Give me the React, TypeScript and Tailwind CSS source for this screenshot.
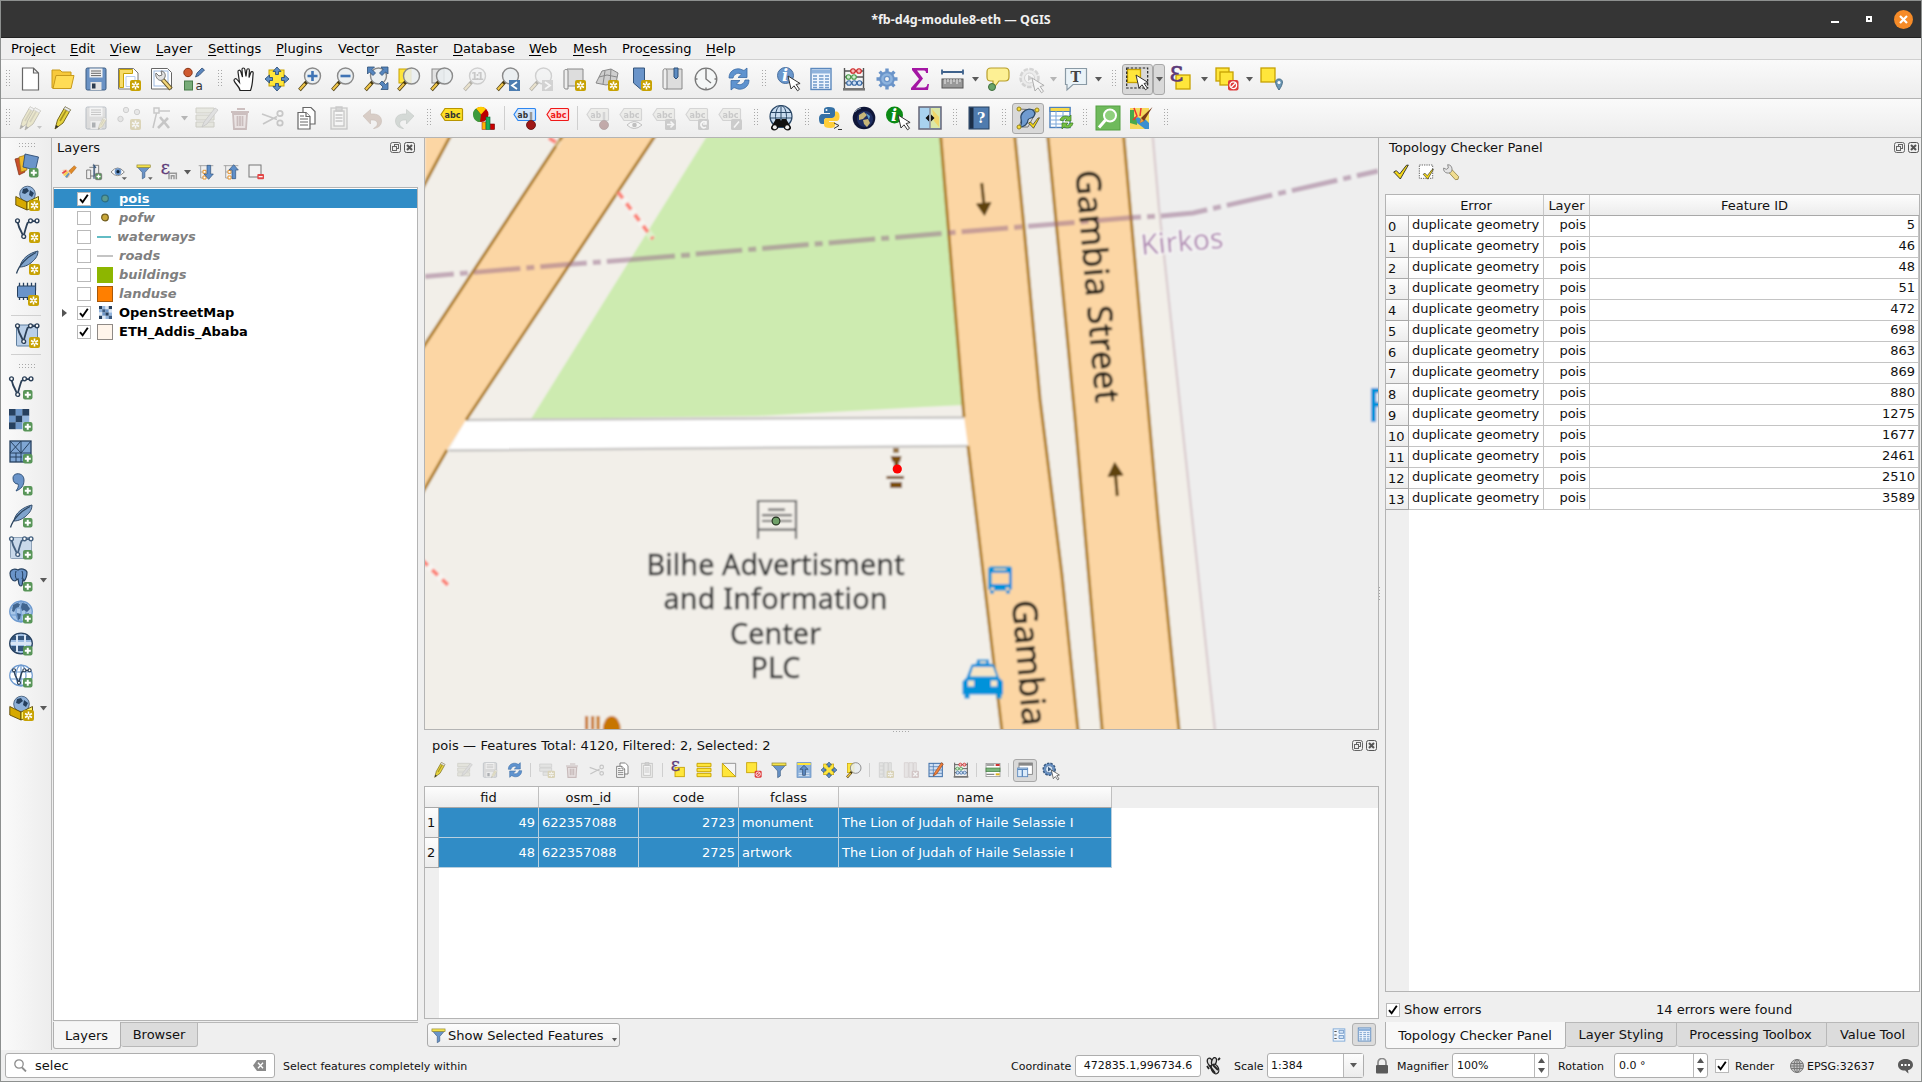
import React from "react";

type Kids = { children?: React.ReactNode };

/* ---------- shared icon parts ---------- */

const Star = ({ x = 13, y = 13 }: { x?: number; y?: number }) => (
  <g transform={`translate(${x} ${y})`}>
    <rect width="11" height="11" rx="2" fill="#c7a203" />
    <path d="M5.5 1.5v8M2 3.5l7 4M9 3.5l-7 4" stroke="#fff" strokeWidth="1.6" />
    <circle cx="5.5" cy="5.5" r="1" fill="#c7a203" />
  </g>
);
const Plus = ({ x = 14, y = 14 }: { x?: number; y?: number }) => (
  <g transform={`translate(${x} ${y})`}>
    <rect width="9.5" height="9.5" rx="2" fill="#589558" />
    <path d="M4.75 1.8v6M1.8 4.75h6" stroke="#fff" strokeWidth="2" />
  </g>
);
const Lens = ({ children }: Kids) => (
  <g>
    <path d="M1.5 23L9 14.5" stroke="#4a3b10" strokeWidth="3.6" />
    <path d="M1.8 22.6L7 16.8" stroke="#f0c64a" strokeWidth="2.2" />
    <circle cx="14.5" cy="9" r="8" fill="#e9edf0" fillOpacity=".85" stroke="#8a8a8a" strokeWidth="1.4" />
    {children}
  </g>
);
const Cursor = ({ x = 12, y = 9 }: { x?: number; y?: number }) => (
  <path
    transform={`translate(${x} ${y})`}
    d="M0 0l3 13 3-3.2 3.5 5 2-1.5-3.4-4.8 4-1z"
    fill="#fff"
    stroke="#333"
    strokeWidth="1"
  />
);
const Pencil = () => (
  <g>
    <path d="M2 23l2.5-9L12 .8l5.5 3L10 17z" fill="#e6d33c" stroke="#77691d" strokeWidth="1" />
    <path d="M7 15L14 3" stroke="#a59220" strokeWidth="1.6" />
    <path d="M2 23l1-4 2.5 1.5z" fill="#333" />
    <path d="M12 .8l5.5 3-1.3 2-5.3-3z" fill="#eee" stroke="#888" strokeWidth=".6" />
  </g>
);
const Floppy = ({ c = "#6a92c4" }: { c?: string }) => (
  <g>
    <rect x="2" y="1" width="20" height="22" rx="1.5" fill={c} stroke="#3a5a80" />
    <rect x="5.5" y="1.5" width="13" height="9" fill="#f2f2f2" />
    <path d="M7 4h10M7 6.3h10M7 8.6h10" stroke="#666" />
    <rect x="6.5" y="15" width="11" height="8" fill="#e4e4e4" />
    <rect x="8" y="16.5" width="3.5" height="5" fill="#2b3b4e" />
  </g>
);
const VNodes = ({ c = "#2b3f57" }: { c?: string }) => (
  <g fill="none" stroke={c} strokeWidth="1.4">
    <path d="M2.5 3.500L4 9q2 4 4.500 9.500Q11 9 12.500 5L15 3.200h7" strokeWidth="1.800" />
    <circle cx="2.500" cy="2.800" r="1.900" fill="#fff" />
    <circle cx="8.700" cy="18.500" r="1.900" fill="#fff" />
    <circle cx="15.500" cy="2.800" r="1.900" fill="#fff" />
    <circle cx="22" cy="2.800" r="1.900" fill="#fff" />
  </g>
);
const Tag = ({ fill, stroke, color, t = "abc" }: { fill: string; stroke: string; color: string; t?: string }) => (
  <g>
    <path d="M1 8.5L5 2.5h16.5a1 1 0 0 1 1 1v10a1 1 0 0 1-1 1H5z" fill={fill} stroke={stroke} strokeWidth="1.2" />
    <text x="4.6" y="12" fontSize="9.5" fontWeight="700" fontFamily="DejaVu Sans, sans-serif" fill={color} textLength={t === "abc" ? 16 : 10.5} lengthAdjust="spacingAndGlyphs">
      {t}
    </text>
  </g>
);
const Feather = () => (
  <g>
    <path d="M5 17C6 9 14 3 23 1c0 6-4 9-6 11s-7 5-12 5z" fill="#7fa3cc" stroke="#36506e" strokeWidth="1" />
    <path d="M1.5 23.5C4 15 12 7 21 2.5" fill="none" stroke="#2f4761" strokeWidth="1.3" />
  </g>
);
const Checker = ({ s = 20 }: { s?: number }) => {
  const u = s / 3;
  const cols = ["#26405f", "#6d96c8", "#26405f", "#6d96c8", "#26405f", "#93b5dd", "#26405f", "#6d96c8", "#b9d0ea"];
  return (
    <g>
      {cols.map((c, i) => (
        <rect key={i} x={(i % 3) * u} y={1 + Math.floor(i / 3) * u} width={u + 0.2} height={u + 0.2} fill={c} />
      ))}
    </g>
  );
};
const MiniRaster = () => {
  const c = ["#26405f", "#93b5dd", "#dbe7f5", "#26405f", "#93b5dd", "#3c5c82", "#6d96c8", "#dbe7f5", "#dbe7f5", "#6d96c8", "#26405f", "#93b5dd", "#26405f", "#dbe7f5", "#93b5dd", "#3c5c82"];
  return (
    <svg width="13" height="13" viewBox="0 0 4 4">
      {c.map((f, i) => (
        <rect key={i} x={i % 4} y={Math.floor(i / 4)} width="1.03" height="1.03" fill={f} />
      ))}
    </svg>
  );
};
const Globe = ({ fill = "#a9c7e8" }: { fill?: string }) => (
  <g fill="none" stroke="#6f9bd0" strokeWidth="1.2">
    <ellipse cx="12" cy="11.5" rx="11.3" ry="10.3" fill={fill} />
    <ellipse cx="12" cy="11.5" rx="5" ry="10.3" />
    <path d="M1.5 8h21M1.5 15h21M12 1v21" />
  </g>
);
const Continents = () => (
  <path d="M4 5l4-2 3 1-1 3-3 1-2 4-2-1zM13 3l5 1 3 5-3 3-3-2-2 1-1-4zM8 13l4 1-1 5-2 1zM16 14l4-1-2 5-2 1z" fill="#41658f" />
);
const Box = () => (
  <g>
    <circle cx="12.5" cy="8" r="7.8" fill="#8fb1d9" stroke="#36506e" strokeWidth=".8" />
    <path d="M8 3l4-1 2 3-4 3-3-1zM15 4l4 3-2 4-3-2z" fill="#26405f" />
    <path d="M.8 10.5L12 16v8L.8 19z" fill="#d6a900" stroke="#5c4a06" strokeWidth=".9" />
    <path d="M12 16l11.5-5.5V19L12 24z" fill="#fff35e" stroke="#5c4a06" strokeWidth=".9" />
  </g>
);
const Gear = ({ c = "#6a94c9", fill = "#8db3de" }: { c?: string; fill?: string }) => (
  <g stroke={c} fill="none">
    <path d="M12 1.500v21M1.500 12h21M4.600 4.600l14.800 14.800M19.400 4.600L4.600 19.400" strokeWidth="3.400" />
    <circle cx="12" cy="12" r="6.800" fill={fill} strokeWidth="2" />
    <circle cx="12" cy="12" r="2.600" fill="#f3f3f3" strokeWidth="1.300" />
  </g>
);
const Abacus = () => (
  <g>
    <path d="M2.5 1v21M21.5 1v21M2.5 4h19M2.5 10h19M2.5 16h19" stroke="#555" strokeWidth="1.4" />
    <rect x="1" y="21" width="22" height="2.6" fill="#777" />
    <g strokeWidth="1.1">
      <g fill="#f7b9b9" stroke="#c22">
        <circle cx="11" cy="4" r="2.3" /><circle cx="17" cy="4" r="2.3" />
      </g>
      <g fill="#cdeccd" stroke="#4a9a4a">
        <circle cx="6.5" cy="10" r="2.3" /><circle cx="12" cy="10" r="2.3" />
      </g>
      <g fill="#cfe0f5" stroke="#3a6aa5">
        <circle cx="7" cy="16" r="2.3" /><circle cx="12.3" cy="16" r="2.3" /><circle cx="17.5" cy="16" r="2.3" />
      </g>
    </g>
  </g>
);
const TableGrid = () => (
  <g>
    <rect x="2" y="1.5" width="20" height="21" fill="#eef5fd" stroke="#5b88bd" strokeWidth="1.4" />
    <rect x="3" y="2.5" width="18" height="4" fill="#8fb3dc" />
    <path d="M4 9h4M10 9h4.500M16 9h4M4 12h4M10 12h4.500M16 12h4M4 15h4M10 15h4.500M16 15h4M4 18h4M10 18h4.500M16 18h4M4 20.500h4M10 20.500h4.500M16 20.500h4" stroke="#6f99c9" strokeWidth="1.3" />
  </g>
);
const Refresh = () => (
  <g fill="#5f93cf" stroke="#3b6ba5" strokeWidth=".8">
    <path d="M2 11C2 4 8 1 13 2l4 1.500L20 1v9.500h-9l3.500-3.300C11 5 7 7 6 11z" />
    <path d="M22 13c0 7-6 10-11 9l-4-1.500L4 23v-9.500h9l-3.500 3.300C13 19 17 17 18 13z" />
  </g>
);
const Funnel = () => (
  <g>
    <path d="M2 4.500h20l-8 9V21l-4 2.500v-10z" fill="#6a94c9" stroke="#3a5a80" strokeWidth="1" />
    <rect x="1.500" y="1.500" width="21" height="4" fill="#f5e34d" stroke="#8d8330" strokeWidth="1" />
  </g>
);
const YSq = ({ x, y, s = 14 }: { x: number; y: number; s?: number }) => (
  <rect x={x} y={y} width={s} height={s} fill="#ffe63b" stroke="#c7a203" strokeWidth="1.3" />
);
const No = ({ x = 13, y = 13 }: { x?: number; y?: number }) => (
  <g transform={`translate(${x} ${y})`}>
    <rect width="10.500" height="10.500" rx="2" fill="#de3a3a" />
    <circle cx="5.250" cy="5.250" r="3.300" fill="none" stroke="#fff" strokeWidth="1.300" />
    <path d="M3 7.500l4.500-4.500" stroke="#fff" strokeWidth="1.300" />
  </g>
);
const Eps = ({ x = -0.5, y = 14, s = 27 }: { x?: number; y?: number; s?: number }) => (
  <text x={x} y={y} fontSize={s} fontFamily="DejaVu Serif, serif" fill="#5c3a78" stroke="#5c3a78" strokeWidth=".4">ε</text>
);
const Arrows4 = () => (
  <path
    d="M12 0l4 4.500h-2.500v3h-3v-3H8zM12 24l-4-4.500h2.500v-3h3v3H16zM0 12l4.500-4v2.500h3v3h-3V16zM24 12l-4.500 4v-2.500h-3v-3h3V8z"
    fill="#5f8fc9"
    stroke="#2e5078"
    strokeWidth=".9"
  />
);
const Trash = () => (
  <g fill="none" stroke="#a05555" strokeWidth="1.800">
    <path d="M5 8h14l-1 15H6z" fill="#e8c4c4" />
    <path d="M3 6h18M9 3h8M9.500 10v10M12 10v10M14.500 10v10" />
  </g>
);
const Scissors = () => (
  <g fill="none" stroke="#777" strokeWidth="1.800">
    <path d="M1 8l15 5.500M2 18l14-7.500" />
    <circle cx="19" cy="7.500" r="2.700" /><circle cx="19" cy="17" r="2.700" />
  </g>
);
const Copy = () => (
  <g fill="#fff" stroke="#666" strokeWidth="1.200">
    <path d="M9 1.500h8l4 4V18H9z" />
    <path d="M4 6.500h8l4 4V23H4z" />
    <path d="M6 13h8M6 16h8M6 19h8M6 10h4" />
    <path d="M12 6.500v4h4" />
  </g>
);
const Paste = () => (
  <g fill="#e6e6dc" stroke="#777" strokeWidth="1.300">
    <rect x="4" y="2" width="16" height="21" /><rect x="7" y="5" width="10" height="15" fill="#fff" />
    <path d="M9 1h6v4H9z" fill="#999" /><path d="M8.500 9h7M8.500 12h7M8.500 15h7" />
  </g>
);
const Undo = () => <path d="M3 10l7.500-6.500V8c7-.5 11 2 11 7s-4 7-8 7.500c3.500-2 4.500-4 3.500-6.500-.8-1.700-3-2.200-6.500-2v4z" fill="#c2805a" stroke="#94552f" strokeWidth=".6" />;
const RowsEdit = () => (
  <g>
    <path d="M1 2h18v5H1zM1 9h18v5H1zM1 16h18v5H1z" fill="#cfd1a8" stroke="#8c8c60" />
    <path d="M7 21l2-5 11-14 3 2-11 14z" fill="#bbb" stroke="#777" strokeWidth=".8" />
  </g>
);
const BrushI = () => (
  <g>
    <path d="M11 11l9-8.500 3 3L15 15z" fill="#e08a28" stroke="#9a5510" strokeWidth=".7" />
    <path d="M2 9l6-1 7 6-3 6-4 1z" fill="#f7c9a9" />
    <path d="M1 13l6-4 2 2-6 4z" fill="#e94848" /><path d="M3 16l6-5 2 2-6 5z" fill="#f5d34a" /><path d="M6 19l5-6 2 2-4 6z" fill="#69b" />
  </g>
);
const Check2 = ({ x = 0, y = 0 }: { x?: number; y?: number }) => (
  <path transform={`translate(${x} ${y})`} d="M1 12l4-2 5 5L20 2l3-.500-12 21z" fill="#f5d818" stroke="#222" strokeWidth="1.300" />
);
const Wrench = () => (
  <g>
    <path d="M10 9.500L13 8l10.500 11-1 4-4 .5L9 13z" fill="#f0dc90" stroke="#8f7f40" strokeWidth="1.200" />
    <path d="M1 6l4 2 3-2-1-5c5 0 7 4 6.500 8S9 14 6 13.500 0 10 1 6z" fill="#e4e4e4" stroke="#777" strokeWidth="1.200" />
  </g>
);
const Tree = ({ up = false }: { up?: boolean }) => (
  <g>
    <path d="M1 2.500h22M4 2.500V21h4M4 12h4" stroke="#999" strokeWidth="1.300" fill="none" />
    <path d="M7.500 9.500h4.500v4.500H7.500zM7.500 18h4.500v4.500H7.500z" fill="#fff" stroke="#e8942a" strokeWidth="1.500" />
    <path
      d={up ? "M16 1l7 8h-4v13h-5.500V9H9z" : "M16 23l7-8h-4V2h-5.500v13H9z"}
      fill="#5f8fc9" stroke="#2e5078" strokeWidth="1"
    />
  </g>
);
const PinDot = () => (
  <g>
    <path d="M18 6v9" stroke="#999" strokeWidth="2.500" />
    <circle cx="18" cy="19" r="4.500" fill="#a01818" stroke="#5c0c0c" strokeWidth=".8" />
  </g>
);
const badge = (d: string) => (
  <g>
    <rect x="13" y="13" width="11" height="11" rx="1.500" fill="#888" />
    <path d={d} stroke="#fff" strokeWidth="1.600" fill="none" />
  </g>
);

const ICONS: Record<string, React.ReactNode> = {
  file: <path d="M4.500 1h11l5 5v17h-16zM15.500 1v5h5" fill="#fff" stroke="#666" strokeWidth="1.200" />,
  open: (
    <g stroke="#c79a1b" strokeWidth="1">
      <path d="M1 3h8l2 2h9v4H6L3 21H1z" fill="#f7c93b" />
      <path d="M5 8.500h18L20 21.500H2z" fill="#ffdc55" />
    </g>
  ),
  save: <Floppy />,
  layoutNew: (
    <g>
      <path d="M1.500 1.500h15l4.500 4.500v16H1.500z" fill="#fff" stroke="#777" />
      <path d="M2.500 2.500h13v4h-9v14h-4z" fill="#f7dc6a" stroke="#c7a203" />
      <path d="M9 9.500h9v10H9z" fill="none" stroke="#b9cdf0" />
      <Star />
    </g>
  ),
  layoutMgr: (
    <g>
      <path d="M1.500 1.500h16l4 4v16.500h-20z" fill="#fff" stroke="#666" />
      <rect x="4" y="4" width="14" height="15" fill="none" stroke="#9db9e0" />
      <path d="M12 12l9 10" stroke="#6b5a2a" strokeWidth="4.500" /><path d="M12.500 12.500l8 9" stroke="#f3d67a" strokeWidth="2.600" />
      <path d="M6 6l3 3 3-1-1-4c3 0 5 3 4 6s-4 4-6 3-4-4-3-7z" fill="#e2e2e2" stroke="#666" strokeWidth=".9" />
    </g>
  ),
  style: (
    <g>
      <circle cx="5" cy="5.500" r="4.200" fill="#cf5a30" stroke="#8b3718" />
      <path d="M12.500 10l1.500-4 5-5 2.500 2L16 8.500z" fill="#5b86bd" stroke="#2e4d74" strokeWidth=".8" />
      <rect x="1.500" y="14" width="8" height="9" fill="#77ab78" stroke="#477a48" />
      <text x="12.500" y="22.500" fontSize="12" fontFamily="DejaVu Sans, sans-serif" fill="#333">a</text>
    </g>
  ),
  hand: <path d="M8 23.500c0-3.500-5-6.500-6-10 0-2 2-2.500 3.500-.5l2 2.500L6 5c-.3-2 2-2.500 2.700-.6L10.500 10 10 2.500c0-2 2.600-2 2.900 0L14 9.500l.8-6.500c.3-1.800 2.600-1.600 2.600.3L17 10.500l1.800-5c.6-1.500 2.600-1 2.400.7C20.500 11 21 17 18.500 23.500z" fill="#fff" stroke="#222" strokeWidth="1.200" />,
  pan: <g><rect x="4" y="3" width="15" height="16" fill="#ffe63b" stroke="#c7a203" /><Arrows4 /></g>,
  zin: <Lens><path d="M14.500 4v10M9.500 9h10" stroke="#3f74b5" strokeWidth="2.600" /></Lens>,
  zout: <Lens><path d="M9.500 9h10" stroke="#3f74b5" strokeWidth="2.600" /></Lens>,
  zfull: (
    <g>
      <Lens />
      <path d="M3.500 0h7L8 2.500l3.500 3.500-2.500 2.500L5.500 5 3.500 7zM24 0v7l-2.500-2L18 8.500 15.500 6 19 2.500 17 0zM24 22.500h-7l2-2.500-3.500-3.500L18 14l3.500 3.500 2.500-2z" fill="#5585bd" stroke="#2e5078" strokeWidth=".8" />
    </g>
  ),
  zsel: <g><rect x="2" y="2" width="12" height="14" fill="#ffe63b" stroke="#c7a203" /><Lens /></g>,
  zlay: <g><rect x="2" y="2" width="12" height="14" fill="#e2e2e2" stroke="#888" /><Lens /></g>,
  z11: <Lens><text x="8" y="13" fontSize="10" fontWeight="700" fontFamily="DejaVu Sans, sans-serif" fill="#777" textLength="13">1:1</text></Lens>,
  zlast: <g><Lens /><rect x="13" y="13" width="11" height="11" fill="#4c7cb0" /><path d="M21 15l-5 3.500 5 3.500" stroke="#fff" strokeWidth="1.800" fill="none" /></g>,
  znext: <g><Lens /><rect x="13" y="13" width="11" height="11" fill="#999" /><path d="M16 15l5 3.500-5 3.500" stroke="#fff" strokeWidth="1.800" fill="none" /></g>,
  mapnew: <g><path d="M5 2h16v17H5z" fill="#ddd" stroke="#888" /><path d="M2 4c0-2 4-2 4 0v18H4c-1.500 0-2-1-2-2z" fill="#eee" stroke="#888" /><Star /></g>,
  view3d: <g><path d="M1 16L7 4l9-2 7 4-2 10-10 2z" fill="#cfcfcf" stroke="#888" /><path d="M4 10l8-2 10 2M10 4l-2 13M16 2l-1 15" stroke="#888" fill="none" /><Star /></g>,
  bmnew: <g><path d="M5.500 1h11v18l-4 3-7-6z" fill="#6a94c9" stroke="#34557c" /><Star /></g>,
  bm: <g><path d="M5 2h16v20H5z" fill="#ddd" stroke="#888" /><path d="M2 4c0-3 4-3 4 0v18H4c-1.500 0-2-1-2-2z" fill="#eee" stroke="#888" /><path d="M13 1h4v9l-2 2-2-2z" fill="#5d8cc2" stroke="#2e5078" /></g>,
  clock: <g><circle cx="12" cy="12" r="10.800" fill="#f5f7f7" stroke="#777" strokeWidth="1.300" /><path d="M12 3v9l5 4M12 1.500v2M12 20.500v2M1.500 12h2M20.500 12h2" stroke="#777" strokeWidth="1.400" fill="none" /></g>,
  refresh: <Refresh />,
  identify: <g><circle cx="9.500" cy="8.500" r="8" fill="#6a97cc" stroke="#486f9f" /><text x="6" y="14" fontSize="16" fontWeight="700" fontStyle="italic" fontFamily="DejaVu Serif, serif" fill="#fff">i</text><Cursor /></g>,
  table: <TableGrid />,
  abacus: <Abacus />,
  gear: <Gear />,
  sigma: <path d="M4 1h16v5h-2c0-2-1-2.500-3-2.500H9l6 8-7 9h8c2 0 3-1 3.500-3.500h1.500L20 23H3v-2l8-9-7-9z" fill="#a416a4" />,
  measure: <g><path d="M1 5h21M1 2.500v5M22 2.500v5" stroke="#3f628c" strokeWidth="1.800" /><rect x="1" y="12" width="21" height="9" fill="#999" stroke="#555" /><path d="M4 12v5M7 12v3M10 12v5M13 12v3M16 12v5M19 12v3" stroke="#eee" /></g>,
  balloon: <g><path d="M5 1h14c3 0 4 1 4 4v5c0 3-1 4-4 4h-6l-6 8V14H5c-3 0-4-1-4-4V5c0-3 1-4 4-4z" fill="#fdf094" stroke="#b79e2a" strokeWidth="1.200" /><circle cx="6" cy="20" r="3.500" fill="#69a469" stroke="#3e6e3e" /></g>,
  gearsel: <g><circle cx="10.500" cy="11" r="9" fill="#ddd" stroke="#999" strokeWidth="2.500" strokeDasharray="4.500 1.500" /><circle cx="10.500" cy="11" r="5" fill="#f4f4f4" stroke="#999" /><path d="M9 8v6l5-3z" fill="#888" /><Cursor x={13} y={11} /></g>,
  text: <g><path d="M1.500 1.500h21v16H9L3 23v-5.500H1.500z" fill="#eaf3f8" stroke="#8a9aa5" strokeWidth="1.200" /><text x="6.500" y="14.500" fontSize="14" fontWeight="700" fontFamily="DejaVu Serif, serif" fill="#444">T</text></g>,
  select: <g><YSq x={1.500} y={2.500} s={13} /><rect x=".7" y="1" width="21" height="20" fill="none" stroke="#222" strokeWidth="1.200" strokeDasharray="2.500 1.500" /><Cursor x={10} y={8} /></g>,
  selexp: <g><YSq x={6} y={8} /><Eps /></g>,
  desel: <g><YSq x={1} y={1} s={13} /><YSq x={5} y={5} s={13} /><No /></g>,
  selloc: <g><YSq x={1} y={1} /><path d="M19 23c-5-7-4-11 0-11s5 4 0 11z" fill="#6b97b5" stroke="#446a85" /><circle cx="19" cy="15.500" r="1.500" fill="#fff" /></g>,

  pencils: <g><Pencil /><g transform="translate(5 1)"><Pencil /></g><path d="M19 20h5l-2.500 3z" fill="#777" /></g>,
  pencil: <g transform="translate(2 0)"><Pencil /></g>,
  saveEdit: <g><Floppy c="#b5b5b5" /><g transform="translate(13 11) scale(.55)"><Pencil /></g></g>,
  points: <g><g fill="#ccc" stroke="#888"><circle cx="9" cy="4" r="2.700" /><circle cx="20" cy="6" r="2.700" /><circle cx="3.500" cy="13" r="2.700" /></g><Star /></g>,
  vertex: <g fill="none" stroke="#777" strokeWidth="1.500"><path d="M3 22L7 5h13" /><rect x="4" y="2" width="5" height="5" fill="#eee" /><path d="M8 22l10-10M10 11l9 11" strokeWidth="2.600" /></g>,
  rowsEdit: <RowsEdit />,
  trash: <Trash />,
  cut: <Scissors />,
  copy: <Copy />,
  paste: <Paste />,
  undo: <Undo />,
  redo: <g transform="translate(24 0) scale(-1 1)"><path d="M3 10l7.500-6.500V8c7-.5 11 2 11 7s-4 7-8 7.500c3.500-2 4.500-4 3.500-6.500-.8-1.700-3-2.200-6.500-2v4z" fill="#8fae9c" stroke="#607a6a" strokeWidth=".6" /></g>,
  abc: <Tag fill="#ffe026" stroke="#b89500" color="#333" />,
  diagram: (
    <g>
      <circle cx="8" cy="8.500" r="7.500" fill="#b00" /><path d="M8 8.500L3 2.500A7.500 7.500 0 0 1 13 3z" fill="#ffce00" /><path d="M8 8.500L3 2.500A7.500 7.500 0 0 0 7 16z" fill="#3c9a3c" />
      <rect x="9" y="16" width="4" height="7.500" fill="#ffb400" stroke="#a33" strokeWidth=".6" /><rect x="13" y="11" width="4" height="12.500" fill="#1cae5c" stroke="#063" strokeWidth=".6" /><rect x="17.500" y="18" width="4" height="5.500" fill="#c00" stroke="#600" strokeWidth=".6" />
    </g>
  ),
  abpin: <g><Tag fill="#d3e6fb" stroke="#2e86f0" color="#333" t="ab" /><PinDot /></g>,
  abred: <Tag fill="#ffdede" stroke="#f01818" color="#f01818" />,
  tpin: <g><Tag fill="#ddddd0" stroke="#999" color="#777" t="ab" /><PinDot /></g>,
  teye: <g><Tag fill="#ddddd0" stroke="#999" color="#777" /><path d="M8 19q7-7 15 0-8 7-15 0z" fill="#fff" stroke="#666" /><circle cx="15.500" cy="19" r="2.300" fill="#666" /></g>,
  tmove: <g><Tag fill="#ddddd0" stroke="#999" color="#777" />{badge("M15 18.500h6M18.500 15.500l3 3-3 3")}</g>,
  trot: <g><Tag fill="#ddddd0" stroke="#999" color="#777" />{badge("M21 16.500a3 3 0 1 0 0 4.500M21 15v3h-3")}</g>,
  tedit: <g><Tag fill="#ddddd0" stroke="#999" color="#777" />{badge("M16 21.500l5-6")}</g>,
  binoc: (
    <g>
      <circle cx="12" cy="10.500" r="11" fill="#c9dcf0" stroke="#2b4867" strokeWidth="1.200" /><g stroke="#2b4867" fill="none"><ellipse cx="12" cy="10.500" rx="5.500" ry="11" /><path d="M2 6.500h20M1 12h22M12 0v15" /></g>
      <path d="M7 13h4l1 2 1-2h4l5 8c1 4.500-7 4.500-7.500 0h-5C9 25.500 1 25.500 2 21z" fill="#111" /><circle cx="5.800" cy="21.300" r="2" fill="#eee" /><circle cx="18.200" cy="21.300" r="2" fill="#eee" />
    </g>
  ),
  python: (
    <g>
      <path d="M10 1c-4 0-5 1-5 3v3h6v1H4c-3 0-4 2-4 5s1 5 3 5h2v-3c0-2 1-3 3-3h5c2 0 3-1 3-3V4c0-2-2-3-6-3z" fill="#3571a5" />
      <path d="M11 22c4 0 5-1 5-3v-3h-6v-1h7c3 0 3.500-2 3.500-5S19 5.500 17.500 5.500H16V9c0 2-1 3-3 3H8c-2 0-3 1-3 3v4c0 2 2 3 6 3z" fill="#ffce3a" />
      <circle cx="7.500" cy="4" r="1" fill="#fff" /><path d="M15 17l5 2.500-5 3M19 23.500h4" stroke="#333" fill="none" />
    </g>
  ),
  globe: <g><circle cx="12" cy="12" r="11.300" fill="#0f1638" /><circle cx="13" cy="13" r="8" fill="#1f2f63" /><path d="M7 9l5-3 3 3-4 4-4 1zM11 14l5-1 2 4-3 4-3-3z" fill="#c7b678" /><path d="M14 7l4 3-1 4z" fill="#5fa0cc" /><path d="M3 6a11 11 0 0 1 6-4" stroke="#89a" fill="none" /></g>,
  info: <g><circle cx="9.500" cy="9" r="8.500" fill="#0b8a14" /><text x="6" y="14.500" fontSize="16" fontWeight="700" fontStyle="italic" fontFamily="DejaVu Serif, serif" fill="#fff">i</text><Cursor x={13} y={9} /></g>,
  compare: <g><rect x="1" y="1" width="22" height="22" fill="#a9d2ef" stroke="#667" strokeWidth="1.500" /><path d="M12 2h10v20H12z" fill="#dbe8a8" /><path d="M14 3l7 8v10l-5-6z" fill="#f0d66a" /><path d="M12 2v20" stroke="#889" strokeWidth="1.400" /><path d="M11 8.500v7L7.500 12zM13 8.500v7l3.500-3.500z" fill="#111" /></g>,
  help: <g><rect x="2" y="1" width="20" height="22" fill="#4f7bae" stroke="#26405f" /><rect x="2.500" y="1.500" width="4" height="21" fill="#1c2f47" /><text x="10" y="17" fontSize="14" fontWeight="700" fontFamily="DejaVu Serif, serif" fill="#fff">?</text></g>,
  topo: (
    <g>
      <path d="M3 3l18 1-9 17-9 0M3 21l4-12" stroke="#777" fill="none" /><path d="M5 13c-1-5 3-9 8-10 5 0 7 4 5 7-1 3-5 1-6 4 0 4-4 7-8 7 2-3 2-5 1-8z" fill="#6f9bd0" stroke="#2b4867" strokeWidth="1.200" />
      <g fill="#f5dc3a" stroke="#98851d"><circle cx="3" cy="3" r="2" /><circle cx="21" cy="4" r="2" /><circle cx="3" cy="21" r="2" /></g><g transform="translate(12 11) scale(.5)"><Check2 /></g>
    </g>
  ),
  trefresh: <g><rect x="1" y="1.500" width="20" height="20" fill="#fff" stroke="#4f81bd" strokeWidth="1.400" /><rect x="1" y="1.500" width="20" height="4" fill="#f5d94d" stroke="#4f81bd" /><path d="M1 10h20M1 14h20M1 18h20M7 5v17M14 5v17" stroke="#7da7d9" /><path d="M11 14c1-4 6-5 9-3l2-2v6h-6l2-2c-2-1-3 0-4 2zM24 17c-1 5-6 6-9 4l-2 2v-6h6l-2 2c2 1 3 0 4-2z" fill="#74c043" stroke="#3a7a1c" strokeWidth=".7" /></g>,
  search: <g><rect width="24" height="24" fill="#6fba5c" /><rect width="24" height="24" fill="none" stroke="#55a043" /><circle cx="14" cy="9.500" r="6" fill="#8fd07d" stroke="#fff" strokeWidth="2" /><path d="M9.500 14L3 21.500" stroke="#fff" strokeWidth="3" /></g>,
  osm: <g><rect x="1" y="2" width="19" height="21" fill="#f6d95c" /><path d="M1 4h4v7l3 2v6l-7-2z" fill="#49a84c" /><path d="M7 12c3-3 4 3 8 0l5 5v6h-4L8 17z" fill="#3c8fd0" /><path d="M5 2l3 8-4 4M12 2l-1 8" stroke="#e33" strokeWidth="1.500" fill="none" /><path d="M23.500 1L12 12l-1 5 4-2z" fill="#7b3b17" /><path d="M11 17l1-5 3 3z" fill="#f0a040" /></g>,

  manager: <g><path d="M0 5l8-2 2 15-6 3z" fill="#c9502a" stroke="#7c2d12" strokeWidth=".7" /><path d="M4 3l7-2 1 15-6 2z" fill="#f0bb2a" stroke="#9c7410" strokeWidth=".7" /><path d="M10 0l13.500 3-3 13-12.500-3z" fill="#6a94c9" stroke="#2e4d74" strokeWidth=".9" /><Plus /></g>,
  gpkg: <g><Box /><Star x={14} y={14} /></g>,
  vnew: <g><VNodes /><Star x={14} y={14} /></g>,
  fnew: <g><Feather /><Star x={14} y={14} /></g>,
  chip: <g><path d="M5 1v22M9 1v22M13 1v22M17 1v22M21 1v10" transform="translate(-.5 0) scale(1 .78)" stroke="#26405f" strokeWidth="1.300" /><rect x="2.500" y="4" width="18" height="11.500" rx="1" fill="#6a94c9" stroke="#26405f" /><Star x={13} y={13} /></g>,
  vbox: <g><rect x="1.500" y="2" width="21" height="21" rx="1" fill="#b9cfe8" stroke="#5f7f9f" /><VNodes /><Star x={14} y={14} /></g>,
  vadd: <g><VNodes /><Plus /></g>,
  radd: <g><Checker /><Plus /></g>,
  mesh: <g><rect x="1" y="1" width="21" height="21" fill="#7fa6d4" stroke="#26405f" strokeWidth="1.300" /><path d="M1 13h21M12 1v21M1 1l11 12M12 1L1 13M22 1l-10 12M7 13v9M1 17h12" stroke="#26405f" fill="none" /><Plus /></g>,
  comma: <g><path d="M4 6c0-6 11-6 11 2 0 6-3 9-8 11 2-3 3-5 2-7-3 0-5-2-5-6z" fill="#6a94c9" stroke="#34557c" /><Plus /></g>,
  fadd: <g><Feather /><Plus /></g>,
  vboxadd: <g><rect x="1.500" y="1.500" width="21" height="21" rx="1" fill="#c9d9ea" stroke="#8fa3b8" /><VNodes c="#44607f" /><Plus /></g>,
  pg: <g><path d="M1 5c1-5 6-4 8-3 3-2 8-1 9 2 0 5-2 8-3 9l-1-2c-1 4 0 7-2 7-3 0-2-4-3-7l-3 2C3 13 1 9 1 5z" fill="#6a94c9" stroke="#26405f" strokeWidth="1.200" /><path d="M7 3c-1 4-1 6 1 9M13 3c1 3 1 5 0 8" stroke="#26405f" fill="none" /><Plus /></g>,
  wms: <g><Globe /><Continents /><Plus /></g>,
  wcs: <g><ellipse cx="12" cy="11.500" rx="11.300" ry="10.300" fill="#9dbde2" /><path d="M4 4h16l2 4H2zM2 14h20l-2 5H4z" fill="#34557c" /><path d="M7 1h2v21H7zM15 1h2v21h-2zM1 10h22v3H1z" fill="#d9e6f5" /><ellipse cx="12" cy="11.500" rx="11.300" ry="10.300" fill="none" stroke="#26405f" strokeWidth="1.300" /><Plus /></g>,
  wfs: <g><Globe fill="#fff" /><g transform="translate(3 4) scale(.8)"><VNodes /></g><Plus /></g>,

  brush: <BrushI />,
  group: <g fill="none" stroke="#777" strokeWidth="1.400"><path d="M1 9h6v13H1zM5 5h8v13H7M10 2h9v14h-6" /><path d="M12 22V2l3 4" stroke="#34557c" strokeWidth="1.800" /><Plus /></g>,
  eye: <g><path d="M0 12q10-12 20 0-10 11-20 0z" fill="#fff" stroke="#777" strokeWidth="1.300" /><circle cx="10.500" cy="11.500" r="5" fill="#6a94c9" /><circle cx="10.500" cy="11.500" r="2.400" fill="#123" /><path d="M16 20h8l-4 4z" fill="#666" /></g>,
  filterdd: <g><g transform="scale(.95)"><Funnel /></g><path d="M18 20h7l-3.500 4z" fill="#666" /></g>,
  epsf: <g><Eps y={15} s={27} /><path d="M12 23v-9h11v9M15.500 23v-5.500h4V23" fill="none" stroke="#999" strokeWidth="2.200" /></g>,
  expand: <Tree />,
  collapse: <Tree up />,
  remove: <g><rect x="1.500" y="1.500" width="18" height="18" fill="#f2f2f2" stroke="#777" strokeWidth="1.500" /><rect x="14" y="15" width="10" height="8" rx="1.500" fill="#e24747" /><path d="M16 19h6" stroke="#fff" strokeWidth="1.800" /></g>,
  addrow: <g><path d="M1 3h18v5H1zM1 9h18v5H1zM6 15h12v5H6z" fill="#ccd0c8" stroke="#888" /><Star /></g>,
  selall: <path d="M1.500 2h21v5h-21zM1.500 9.500h21v5h-21zM1.500 17h21v5h-21z" fill="#ffe63b" stroke="#c7a203" strokeWidth="1.400" />,
  invert: <g><path d="M2 2h20v20z" fill="#f4f4f4" stroke="#888" strokeWidth="1.300" /><path d="M2 2v20h20z" fill="#ffe63b" stroke="#c7a203" strokeWidth="1.300" /></g>,
  deselA: <g><YSq x={1} y={1} s={15} /><No /></g>,
  funnel: <Funnel />,
  totop: <g><rect x="1.500" y="1" width="21" height="22" fill="#8fb3dc" stroke="#5b88bd" /><path d="M2 3h20" stroke="#ffe63b" strokeWidth="3" /><path d="M4 20h16M4 17h5M15 17h5" stroke="#fff" /><path d="M12 5l6 6h-4v9h-4v-9H6z" fill="#5f8fc9" stroke="#26405f" /></g>,
  zoomY: <g><rect x="2" y="2" width="10" height="14" fill="#ffe63b" stroke="#c7a203" /><Lens /></g>,
  coladd: <g><path d="M2 1h6v22H2zM9 1h6v22H9zM16 1h4v22h-4z" fill="#ccd0c8" stroke="#888" /><path d="M3 6h5M3 12h5M3 18h5" stroke="#888" /><Star /></g>,
  coldel: <g><path d="M2 1h6v22H2zM9 1h6v22H9zM16 1h4v22h-4z" fill="#ddd0d0" stroke="#a88" /><rect x="13" y="13" width="11" height="11" rx="2" fill="#b77" /><path d="M15.500 15.500l6 6M21.500 15.500l-6 6" stroke="#fff" strokeWidth="2" /></g>,
  fieldcalc: <g><rect x="1.500" y="2" width="20" height="20" fill="#cfe0f5" stroke="#3f6fa8" strokeWidth="1.500" /><path d="M2 7h19M2 12h19M2 17h19M8 2v20" stroke="#3f6fa8" /><path d="M8 21l2-5L20 1l3 2-10 15z" fill="#f0803a" stroke="#933f12" strokeWidth=".9" /></g>,
  cond: <g><rect x="1.500" y="2" width="21" height="20" fill="#fff" stroke="#888" /><path d="M2 4.500h12M2 18.500h12" stroke="#888" strokeWidth="2" /><rect x="1.500" y="9" width="21" height="5.500" fill="#7bb57b" stroke="#3e7a3e" /><path d="M16 4.500h6" stroke="#c33" strokeWidth="3" /><path d="M16 18.500h6" stroke="#d9b020" strokeWidth="3" /></g>,
  dock: <g><rect x="3" y="1.500" width="20" height="17" fill="#fff" stroke="#777" strokeWidth="1.200" /><path d="M3 3.500h20" stroke="#888" strokeWidth="4" /><rect x="1" y="9" width="15" height="13" fill="#dcebfa" stroke="#5b88bd" strokeWidth="1.300" /><path d="M1 11h15M8 11v11" stroke="#5b88bd" strokeWidth="2" /></g>,
  gearmag: <g><g transform="scale(.9)"><circle cx="12" cy="12" r="10" fill="#6a94c9" stroke="#3a5a80" strokeWidth="2.500" strokeDasharray="4 2" /><circle cx="12" cy="12" r="6" fill="#dcebfa" stroke="#3a5a80" /><path d="M10 8v8l6-4z" fill="#3a5a80" /></g><Cursor x={14} y={12} /></g>,
  form: <g><rect x="2" y="1.500" width="20" height="21" fill="#eef5fd" stroke="#7ba6d6" strokeWidth="1.500" /><path d="M4 6h4M4 12h4M4 18h4" stroke="#555" strokeWidth="2" /><path d="M12 4h8v5h-8zM12 13h8v5h-8z" fill="#d5e5f7" stroke="#5b88bd" strokeWidth="1.300" /></g>,
  check: <Check2 />,
  checkext: <g><rect x="2" y="1.500" width="20" height="20" fill="#fff" stroke="#555" strokeWidth="1.300" strokeDasharray="2 1.500" /><g transform="translate(7 7) scale(.7)"><Check2 /></g></g>,
  wrench: <Wrench />,
};

const Icon = ({ n, size = "size-6", off = false }: { n: string; size?: string; off?: boolean }) => (
  <svg viewBox="0 0 24 24" className={`${size} shrink-0 overflow-visible ${off ? "opacity-35 grayscale-[50%]" : ""}`}>
    {ICONS[n]}
  </svg>
);

/* ---------- small widgets ---------- */

const Dots = ({ cols, rows }: { cols: number; rows: number }) => (
  <svg width={cols * 3} height={rows * 3} className="shrink-0">
    {Array.from({ length: cols * rows }, (_, i) => (
      <rect key={i} x={(i % cols) * 3} y={Math.floor(i / cols) * 3} width="1" height="1" fill="#a8a8a8" />
    ))}
  </svg>
);
const Grip = ({ w = "w-4" }: { w?: string }) => (
  <div className={`flex ${w} shrink-0 items-center justify-center pl-1`}>
    <Dots cols={2} rows={6} />
  </div>
);
const Sep = ({ h = "h-6" }: { h?: string }) => (
  <div className="flex w-[7px] shrink-0 items-center justify-center">
    <div className={`${h} w-px bg-[#cfcfcf]`} />
  </div>
);
const Tri = ({ off = false }: { off?: boolean }) => (
  <svg width="7" height="5" className={off ? "opacity-40" : ""}>
    <path d="M0 0h7L3.500 4.500z" fill="#5a5a5a" />
  </svg>
);
const Drop = ({ off = false }: { off?: boolean }) => (
  <div className="flex w-3 shrink-0 items-center justify-center"><Tri off={off} /></div>
);

/* "-name" = disabled, "*name" = pressed, "|14" to "|18" = grip of that width, "," = separator, "v" / "-v" = drop-down arrow */
const GRIPS: Record<string, string> = { "|14": "w-[14px]", "|": "w-4", "|17": "w-[17px]", "|18": "w-[18px]" };
const Tools = ({ items, slot, size }: { items: string[]; slot: string; size: string }) => (
  <>
    {items.map((it, i) => {
      if (it[0] === "|") return <Grip key={i} w={GRIPS[it]} />;
      if (it === ",") return <Sep key={i} h={size === "size-6" ? "h-6" : "h-3.5"} />;
      if (it === "v" || it === "-v") return <Drop key={i} off={it === "-v"} />;
      const off = it[0] === "-";
      const on = it[0] === "*";
      return (
        <div key={i} className={`${slot} flex shrink-0 items-center justify-center`}>
          {on ? (
            <div className={`flex items-center justify-center rounded-[3px] border border-[#a8a8a8] bg-[#d9d9d9] ${size === "size-6" ? "h-[31px] w-8" : "h-[23px] w-6"}`}>
              <Icon n={it.slice(1)} size={size} />
            </div>
          ) : (
            <Icon n={off ? it.slice(1) : it} size={size} off={off} />
          )}
        </div>
      );
    })}
  </>
);

const Checkbox = ({ on = false }: { on?: boolean }) => (
  <div className="flex size-3.5 shrink-0 items-center justify-center border border-[#b9b9b9] bg-white">
    {on && (
      <svg width="10" height="10" viewBox="0 0 10 10">
        <path d="M1 5.200l2.600 3L8.800.8" fill="none" stroke="#000" strokeWidth="1.900" />
      </svg>
    )}
  </div>
);
const DockButtons = () => (
  <div className="flex gap-[3px]">
    <svg width="11" height="11" viewBox="0 0 11 11" fill="none" stroke="#666">
      <rect x=".5" y=".5" width="10" height="10" rx="2" />
      <rect x="4.500" y="2.500" width="4" height="4" /><rect x="2.500" y="4.500" width="4" height="4" fill="#efefef" />
    </svg>
    <svg width="11" height="11" viewBox="0 0 11 11" fill="none" stroke="#555">
      <rect x=".5" y=".5" width="10" height="10" rx="2" />
      <path d="M3 3l5 5M8 3l-5 5" strokeWidth="2" />
    </svg>
  </div>
);
const HEAD = "bg-gradient-to-b from-[#fdfdfd] to-[#ececec]";

/* ---------- data ---------- */

const MENU: [string, string, string, string][] = [
  ["Pro", "j", "ect", "w-[59px]"],
  ["", "E", "dit", "w-10"],
  ["", "V", "iew", "w-[46px]"],
  ["", "L", "ayer", "w-[52px]"],
  ["", "S", "ettings", "w-[68px]"],
  ["", "P", "lugins", "w-[62px]"],
  ["Vect", "o", "r", "w-[58px]"],
  ["", "R", "aster", "w-[57px]"],
  ["", "D", "atabase", "w-[76px]"],
  ["", "W", "eb", "w-11"],
  ["", "M", "esh", "w-[49px]"],
  ["Pro", "c", "essing", "w-[84px]"],
  ["", "H", "elp", "w-[60px]"],
];

const TOOLS1 = ["file", "open", "save", "layoutNew", "layoutMgr", "style", "|", "hand", "pan", "zin", "zout", "zfull", "zsel", "zlay", "-z11", "zlast", "-znext", "mapnew", "view3d", "bmnew", "bm", "clock", "refresh", "|", "identify", "table", "abacus", "gear", "sigma", "measure", "v", "balloon", "-gearsel", "-v", "text", "v", "|18"];
const TOOLS1B = ["selexp", "v", "desel", "v", "selloc"];
const TOOLS2 = ["-pencils", "pencil", "-saveEdit", "-points", "-vertex", "-v", "-rowsEdit", "-trash", "-cut", "copy", "-paste", "-undo", "-redo", "|14", "abc", "diagram", ",", "abpin", "abred", ",", "-tpin", "-teye", "-tmove", "-trot", "-tedit", "|18", "binoc", "|17", "python", "globe", "info", "compare", "|", "help", "|", "*topo", "trefresh", "|14", "search", "osm", "|"];
const ATTR_TOOLS = ["pencil", "-rowsEdit", "-saveEdit", "refresh", ",", "-addrow", "-trash", "-cut", "copy", "-paste", ",", "selexp", "selall", "invert", "deselA", "funnel", "totop", "pan", "zoomY", ",", "-coladd", "-coldel", "fieldcalc", "abacus", ",", "cond", ",", "*dock", "gearmag"];

const ERRORS = [5, 46, 48, 51, 472, 698, 863, 869, 880, 1275, 1677, 2461, 2510, 3589];

const dot = (fill: string, stroke: string) => (
  <svg width="16" height="16"><circle cx="8" cy="7.500" r="3.300" fill={fill} stroke={stroke} strokeWidth="1.200" /></svg>
);
const LAYERS: { name: string; on: boolean; sym: React.ReactNode; style: string; exp?: boolean }[] = [
  { name: "pois", on: true, sym: dot("#5a9a90", "#2f6f80"), style: "text-white underline underline-offset-2" },
  { name: "pofw", on: false, sym: dot("#c9a83a", "#6f5a1a"), style: "italic text-[#7f7f7f]" },
  { name: "waterways", on: false, sym: <div className="mr-0.5 h-0.5 w-3.5 bg-[#62bcc4]" />, style: "italic text-[#7f7f7f] -ml-0.5" },
  { name: "roads", on: false, sym: <div className="h-0.5 w-4 bg-[#c4c4c4]" />, style: "italic text-[#7f7f7f]" },
  { name: "buildings", on: false, sym: <div className="size-4 bg-[#8db600]" />, style: "italic text-[#7f7f7f]" },
  { name: "landuse", on: false, sym: <div className="size-4 border border-[#a85808] bg-[#ff7f00]" />, style: "italic text-[#7f7f7f]" },
  { name: "OpenStreetMap", on: true, sym: <MiniRaster />, style: "text-black", exp: true },
  { name: "ETH_Addis_Ababa", on: true, sym: <div className="size-4 border border-[#8f8a86] bg-[#fff5eb]" />, style: "text-black" },
];

/* ---------- panels ---------- */

const LEFT_TOP = ["manager", "gpkg", "vnew", "fnew", "chip"];
const LEFT_BOTTOM = ["vadd", "radd", "mesh", "comma", "fadd", "vboxadd", "pg", "wms", "wcs", "wfs", "gpkg"];

const LeftBar = () => (
  <div className="flex w-[51px] shrink-0 flex-col border-r border-[#b8b8b8] bg-gradient-to-r from-[#fafafa] to-[#ededed]">
    <div className="flex h-3 items-end justify-center pb-px pl-1"><Dots cols={6} rows={2} /></div>
    {LEFT_TOP.map((n) => (
      <div key={n} className="flex h-8 items-center pl-[14px]"><Icon n={n} /></div>
    ))}
    <div className="mx-2.5 mt-[5px] h-px bg-[#d0d0d0]" />
    <div className="mt-0.5 flex h-[33px] items-center pl-[14px]"><Icon n="vbox" /></div>
    <div className="mx-2.5 mt-[3px] h-px bg-[#d0d0d0]" />
    <div className="mb-0.5 flex h-[15px] items-end justify-center pl-1"><Dots cols={6} rows={2} /></div>
    {LEFT_BOTTOM.map((n) => (
      <div key={n} className="flex h-8 items-center pl-2">
        <Icon n={n} />
        {(n === "pg" || n === "gpkg") && <div className="ml-[7px]"><Tri /></div>}
      </div>
    ))}
  </div>
);

const LayersDock = () => (
  <div className="flex w-[366px] shrink-0 flex-col pl-px">
    <div className="flex h-[19px] items-center justify-between pr-[3px] pl-1">
      <span>Layers</span>
      <DockButtons />
    </div>
    <div className="flex h-[30px] items-center pl-[3px]">
      <Tools slot="w-[25px]" size="size-4" items={["brush", "group", "eye", "filterdd", "epsf"]} />
      <div className="flex w-3 justify-center"><Tri /></div>
      <Tools slot="w-[25px]" size="size-4" items={["expand", "collapse", "remove"]} />
    </div>
    <div className="flex h-[834px] flex-col border border-[#b4b4b4] bg-white pt-px">
      {LAYERS.map((l, i) => (
        <div key={l.name} className={`flex h-[19px] items-center pl-2 font-bold ${i === 0 ? "bg-[#308cc6]" : ""}`}>
          <div className="w-[15px]">{l.exp && <svg width="5" height="8"><path d="M0 0l5 4-5 4z" fill="#555" /></svg>}</div>
          <Checkbox on={l.on} />
          <div className="ml-1.5 flex w-4 justify-center">{l.sym}</div>
          <div className="ml-1.5 leading-none"><span className={l.style}>{l.name}</span></div>
        </div>
      ))}
    </div>
    <div className="mt-px flex items-start">
      <div className="flex h-[27px] w-[68px] items-center justify-center rounded-b-[3px] border border-t-0 border-[#b0b0b0] bg-[#f6f6f6] pr-px">Layers</div>
      <div className="flex h-[25px] w-[77px] items-center justify-center rounded-b-[3px] border border-l-0 border-[#b8b8b8] bg-[#dcdcdc]">Browser</div>
      <div className="h-px flex-1 bg-[#b8b8b8]" />
    </div>
  </div>
);

const MapCanvas = () => {
  const purple = { fill: "none", stroke: "#936588", strokeOpacity: 0.5, strokeWidth: 5 };
  const casing = { fill: "none", stroke: "#ad7d1e", strokeWidth: 3 };
  return (
    <svg viewBox="425 138 953 591" width="953" height="591" className="block">
      <defs>
        <filter id="soft" x="-5%" y="-5%" width="110%" height="110%"><feGaussianBlur stdDeviation=".8" /></filter>
      </defs>
      <g filter="url(#soft)">
        <rect x="415" y="128" width="973" height="611" fill="#f2efe9" />
        <path d="M1152 128L1159 208 1183 433 1216 740H1400V128z" fill="#eeeeee" />
        <path d="M1152 128L1159 208 1183 433 1216 740" fill="none" stroke="#dccfd1" strokeWidth="2.500" />
        <path d="M712 128L531 419 757 416 924 407 964 405 939 128z" fill="#cdebb0" />
        <path d="M449 450L466 420 968 417.500 970 446z" fill="#fff" />
        <path d="M466 420L965 417.500M449 450.500L969 446" fill="none" stroke="#c8c6c4" strokeWidth="2.500" />
        <path d="M425 128H456L425 185z" fill="#fcd6a4" />
        <path d="M456 126L449 138.500 420 193" {...casing} />
        <path d="M569 126L420 352V497L447 450 466 420 661 127z" fill="#fcd6a4" />
        <path d="M569 126L420 352M661 127L466 420M447 450L420 497" {...casing} />
        <path d="M939 128L964 417 968 446 1003 740H1079L1062 575 1040 399 1014 128z" fill="#fcd6a4" />
        <path d="M940 128L964 417M968 446L1003 740M1014 128L1024 227 1040 399 1062 575 1079 740" {...casing} />
        <path d="M1047 128L1075 418 1103 740H1180L1158 518 1123 128z" fill="#fcd6a4" />
        <path d="M1047 128L1075 418 1103 740M1123 128L1158 518 1180 740" {...casing} />
        <path d="M425 276.500L567 264.500 626 260" {...purple} strokeDasharray="46.700 6 8 6" strokeDashoffset="17.700" />
        <path d="M626 260L675 256M681 255.500L690 255" {...purple} />
        <path d="M695.700 254L924 235 1133 217.500 1160 216 1193 213 1378 171" {...purple} strokeDasharray="46.700 6 8 6" />
        <g fill="none" stroke="#fff" strokeOpacity=".35" strokeWidth="7">
          <path d="M549 138L560 145M618 192L653 239M422 560L449 586" />
        </g>
        <g fill="none" stroke="#fb8378" strokeWidth="4" strokeDasharray="8 6">
          <path d="M549 138L560 145M618 192L653 239M422 560L449 586" />
        </g>
        <g fill="#5e4207" stroke="#5e4207" strokeWidth="3">
          <path d="M981.700 183L984 205" /><path d="M976.500 204L991 202.500 984.500 215.500z" strokeWidth="1" />
          <path d="M1117.300 496L1115.500 475" /><path d="M1108 476.500L1123 475 1114.700 462.500z" strokeWidth="1" />
        </g>
        <g fill="#7a4e0e">
          <rect x="893" y="448" width="6" height="5" opacity=".75" />
          <path d="M890.500 456h11l-1.500 6h-1v9h-5v-9h-1.500z" />
          <rect x="886.500" y="476" width="17.500" height="3" /><rect x="890" y="482" width="12" height="6" />
        </g>
        <path d="M758 539V501h38v38M758 529.600h38M768 509.700h17M762 515.200h30M762 521h30" fill="none" stroke="#686868" strokeWidth="2.200" />
        <g fill="#c77400">
          <rect x="585" y="716" width="3.200" height="14" /><rect x="591" y="716" width="3.200" height="14" /><rect x="596.500" y="716" width="3.200" height="14" />
          <ellipse cx="611.700" cy="730" rx="9" ry="14" />
        </g>
        <g fill="#0092da">
          <path d="M991 566.500h19q2 0 2 3v20h-2v4h-4v-3h-12v3h-4v-4h-1.700v-20q0-3 2.700-3z" />
          <path d="M977 659.500h12v4l5 1 5 13 4 4v13h-1.500v4h-5v-4h-27v4h-5v-4h-2v-13l4-4 5-13 5-1z" />
          <path d="M1371 388h12v5h-7v29h-5z" /><path d="M1376 402h6v5h-6z" />
        </g>
        <g fill="#fcd6a4">
          <rect x="991.500" y="573" width="17.500" height="11" /><rect x="994" y="568.500" width="12" height="1.800" /><rect x="991" y="587.500" width="3" height="3" /><rect x="1006" y="587.500" width="3" height="3" />
        </g>
        <path d="M973 667h20l3.500 9.500h-26.500zM968 680.500h6v6h-6zM991 680.500h6v6h-6zM980 661.300h6v2h-6z" fill="#f6e6c8" />
        <g fontFamily="Noto Sans, sans-serif" fill="#353535" stroke="#353535" strokeOpacity=".6" strokeWidth=".8" fontSize="28.700" textAnchor="middle">
          <text x="775.500" y="575" textLength="258">Bilhe Advertisment</text>
          <text x="775.500" y="609" textLength="224">and Information</text>
          <text x="775.500" y="643.500" textLength="91">Center</text>
          <text x="775.500" y="678" textLength="50">PLC</text>
        </g>
        <g fontFamily="Noto Sans, sans-serif" fill="#1f1a12" stroke="#1f1a12" strokeOpacity=".6" strokeWidth=".8" fontSize="34">
          <text transform="translate(1075.500 171) rotate(85)" textLength="233">Gambia Street</text>
          <text transform="translate(1012 601) rotate(85)" textLength="126">Gambia</text>
        </g>
        <g fontFamily="Noto Sans, sans-serif" fontSize="28.500">
          <text transform="translate(1141.500 255) rotate(-5)" fill="#b08ab2" stroke="#fff" strokeOpacity=".7" strokeWidth="2.500" paintOrder="stroke" textLength="83">Kirkos</text>
        </g>
      </g>
      <circle cx="897.300" cy="469" r="4.600" fill="#f00" />
      <circle cx="776" cy="521" r="3.900" fill="#6fa068" stroke="#23301f" strokeWidth="1.100" />
    </svg>
  );
};

const ATTR_ROWS = [
  ["1", "49", "622357088", "2723", "monument"],
  ["2", "48", "622357088", "2725", "artwork"],
];
const AttributeDock = () => {
  const h = `flex h-[21px] items-center justify-center border-r border-b border-[#c0c0c0] border-b-[#a8a8a8] ${HEAD}`;
  const c = "flex h-[30px] items-center border-r border-b border-[#b9cfde] bg-[#308cc6] px-[3px] text-white";
  return (
    <div className="flex flex-1 flex-col">
      <div className="flex h-[23px] items-center justify-between pr-[2px] pl-2">
        <span className="tracking-[0.08px]">pois — Features Total: 4120, Filtered: 2, Selected: 2</span>
        <DockButtons />
      </div>
      <div className="flex h-[29px] items-center pb-[3px] pl-[3px]">
        <Tools slot="w-[25px]" size="size-4" items={ATTR_TOOLS} />
      </div>
      <div className="flex h-[233px] flex-col border border-[#b4b4b4] bg-white">
        <div className="flex bg-[#efefef]">
          <div className={`${h} w-[14px] border-r-0`} />
          <div className={`${h} w-[100px]`}>fid</div>
          <div className={`${h} w-[100px]`}>osm_id</div>
          <div className={`${h} w-[100px]`}>code</div>
          <div className={`${h} w-[100px]`}>fclass</div>
          <div className={`${h} w-[273px]`}>name</div>
        </div>
        {ATTR_ROWS.map((r) => (
          <div key={r[0]} className="flex">
            <div className={`flex h-[30px] w-[14px] items-center border-r border-b border-[#a8a8a8] pl-0.5 ${HEAD}`}>{r[0]}</div>
            <div className={`${c} w-[100px] justify-end`}>{r[1]}</div>
            <div className={`${c} w-[100px]`}>{r[2]}</div>
            <div className={`${c} w-[100px] justify-end`}>{r[3]}</div>
            <div className={`${c} w-[100px]`}>{r[4]}</div>
            <div className={`${c} w-[273px]`}>The Lion of Judah of Haile Selassie I</div>
          </div>
        ))}
        <div className="w-[14px] flex-1 bg-[#efefef]" />
      </div>
      <div className="flex flex-1 items-start justify-between pt-1 pr-[3px] pl-[3px]">
        <div className={`flex h-6 w-[193px] items-center rounded-[3px] border border-[#ababab] pl-[3px] ${HEAD}`}>
          <Icon n="funnel" size="size-[15px]" />
          <span className="ml-0.5 flex-1">Show Selected Features</span>
          <div className="mr-0.5 self-end pb-1"><svg width="5" height="4"><path d="M0 0h5L2.500 3.500z" fill="#555" /></svg></div>
        </div>
        <div className="flex items-center">
          <div className="mr-1.5"><Icon n="form" size="size-[14px]" /></div>
          <div className="flex h-[23px] w-6 items-center justify-center rounded-[3px] border border-[#b0b0b0] bg-[#dcdcdc]"><Icon n="table" size="size-[15px]" /></div>
        </div>
      </div>
    </div>
  );
};

const TopologyDock = () => {
  const h = `flex h-[21px] items-center justify-center border-r border-b border-[#c8c8c8] border-b-[#a8a8a8] pt-px ${HEAD}`;
  const c = "flex h-[21px] items-center border-r border-b border-[#c4c4c4] px-[3px] pb-[3px]";
  const tab = "flex h-[25px] items-center justify-center rounded-b-[3px] border border-l-0 border-[#b8b8b8] bg-[#dcdcdc]";
  return (
    <div className="flex w-[536px] shrink-0 flex-col">
      <div className="flex h-[19px] items-center justify-between pr-[2px] pl-1">
        <span>Topology Checker Panel</span>
        <DockButtons />
      </div>
      <div className="flex h-[37px] items-start pt-[7px] pl-[3px]">
        <Tools slot="w-[25px]" size="size-4" items={["check", "checkext", "wrench"]} />
      </div>
      <div className="mr-px flex h-[798px] flex-col border border-[#b4b4b4] bg-white">
        <div className="flex">
          <div className={`${h} w-[23px] border-r-0`} />
          <div className={`${h} w-[135px]`}>Error</div>
          <div className={`${h} w-[46px]`}>Layer</div>
          <div className={`${h} flex-1 border-r-0`}>Feature ID</div>
        </div>
        {ERRORS.map((id, i) => (
          <div key={id} className="flex">
            <div className={`flex h-[21px] w-[23px] items-center border-r border-b border-[#a8a8a8] pt-px pl-0.5 ${HEAD}`}>{i}</div>
            <div className={`${c} w-[135px]`}>duplicate geometry</div>
            <div className={`${c} w-[46px] justify-end`}>pois</div>
            <div className={`${c} flex-1 justify-end`}>{id}</div>
          </div>
        ))}
        <div className="w-[23px] flex-1 bg-[#efefef]" />
      </div>
      <div className="flex h-[30px] items-center pt-[5px] pl-px">
        <Checkbox on />
        <span className="ml-[4px] w-[252px]">Show errors</span>
        <span>14 errors were found</span>
      </div>
      <div className="flex items-start">
        <div className="flex h-[27px] w-[181px] items-center justify-center rounded-b-[3px] border border-t-0 border-[#b0b0b0] bg-[#f8f8f8] pr-px">Topology Checker Panel</div>
        <div className={`${tab} w-[111px]`}>Layer Styling</div>
        <div className={`${tab} w-[150px] pr-0.5`}>Processing Toolbox</div>
        <div className={`${tab} w-[92px]`}>Value Tool</div>
      </div>
    </div>
  );
};

const Spin = () => (
  <div className="flex h-full w-[14px] flex-col items-center justify-center gap-[5px] border-l border-[#b8b8b8]">
    <svg width="7" height="5"><path d="M0 5h7L3.500 0z" fill="#555" /></svg>
    <svg width="7" height="5"><path d="M0 0h7L3.500 5z" fill="#555" /></svg>
  </div>
);
const field = "flex shrink-0 items-center rounded-[3px] border border-[#aeaeae] bg-white";

const StatusBar = () => (
  <div className="flex h-[31px] shrink-0 items-center pl-1 text-[11px]">
    <div className={`${field} h-[25px] w-[270px] pl-2 text-[13px]`}>
      <svg width="13" height="13" viewBox="0 0 13 13" fill="none" stroke="#8d8d8d" strokeWidth="1.300"><circle cx="5" cy="5" r="4.200" /><path d="M8 8.500l4 4" strokeWidth="1.800" /></svg>
      <span className="ml-2 flex-1">selec</span>
      <svg width="13" height="11" className="mr-2"><path d="M4 0h9v11H4L0 5.500z" fill="#8a8a8a" /><path d="M5 2.800l5 5.400M10 2.800l-5 5.400" stroke="#fff" strokeWidth="1.300" /></svg>
    </div>
    <span className="ml-2 w-[728px] pt-px">Select features completely within</span>
    <span className="w-[64px] pt-px">Coordinate</span>
    <div className={`${field} h-[22px] w-[126px] justify-center`}>472835.1,996734.6</div>
    <svg width="16" height="18" viewBox="0 0 16 18" className="ml-1" fill="none" stroke="#222" strokeWidth="1.300">
      <g fill="#ddd"><ellipse cx="5" cy="5" rx="2.500" ry="4" transform="rotate(-20 5 5)" /><ellipse cx="9" cy="4.500" rx="2.300" ry="4" transform="rotate(15 9 4.500)" /><ellipse cx="10" cy="12" rx="3.500" ry="5" transform="rotate(-25 10 12)" /></g>
      <path d="M4 8l6 8M8 8l5 5M13 3l2-2M2 9l2 3" strokeWidth="1.800" />
    </svg>
    <span className="ml-[13px] w-[33px] pt-px">Scale</span>
    <div className={`${field} h-[25px] w-[97px] pl-[3px]`}>
      <span className="flex-1">1:384</span>
      <div className={`flex h-full w-5 items-center justify-center border-l border-[#b8b8b8] ${HEAD}`}><Tri /></div>
    </div>
    <svg width="14" height="16" viewBox="0 0 14 16" className="ml-[11px]"><path d="M3 8V4.500a4 4 0 0 1 8 0V8" fill="none" stroke="#8a8a8a" strokeWidth="1.700" /><rect x="1" y="7" width="12" height="8.500" rx="1" fill="#5a5a5a" /></svg>
    <span className="ml-2 w-[55px] pt-px">Magnifier</span>
    <div className={`${field} h-[25px] w-[97px] pl-1`}><span className="flex-1">100%</span><Spin /></div>
    <span className="ml-[9px] w-[56px] pt-px">Rotation</span>
    <div className={`${field} h-[25px] w-[94px] pl-1`}><span className="flex-1">0.0 °</span><Spin /></div>
    <div className="ml-[7px]"><Checkbox on /></div>
    <span className="ml-1.5 w-[54px] pt-px">Render</span>
    <svg width="16" height="16" viewBox="0 0 16 16" fill="none" stroke="#777"><circle cx="8" cy="8" r="6.500" fill="#c8c8c8" /><ellipse cx="8" cy="8" rx="3" ry="6.500" /><path d="M2 5.500h12M2 10.500h12M8 1.500v13M1 8h14" /></svg>
    <span className="ml-0.5 flex-1 pt-px whitespace-nowrap">EPSG:32637</span>
    <svg width="17" height="16" viewBox="0 0 17 16" className="mr-[7px]"><path d="M8.500 1C4 1 1 3.500 1 7s3 5.500 6.500 5.500c1 0 1 .5 4 3l-.5-3.300C14 11.500 16 9.500 16 7c0-3.500-3-6-7.500-6z" fill="#5a5a5a" /><path d="M4 7h2M7.500 7h2M11 7h2" stroke="#fff" strokeWidth="2" /></svg>
  </div>
);

export default function App() {
  return (
    <div className="flex h-[1082px] w-[1922px] flex-col overflow-hidden border border-[#8d908f] bg-[#efefef] font-['DejaVu_Sans',sans-serif] text-[13px] leading-none text-[#111]">
      <div className="flex h-[37px] shrink-0 items-center border-b border-[#222] bg-[#353535]">
        <div className="w-[110px]" />
        <div className="flex-1 pt-0.5 text-center font-['Noto_Sans',sans-serif] text-[12.500px] font-bold text-[#f0f0f0]">*fb-d4g-module8-eth — QGIS</div>
        <div className="flex w-[110px] items-center">
          <div className="mt-1.5 ml-5 h-[2px] w-2 bg-white" />
          <div className="ml-[27px] size-[6px] border-2 border-white" />
          <div className="ml-[22px] flex size-[19px] items-center justify-center rounded-full bg-[#f68b28]">
            <svg width="9" height="9"><path d="M1 1l7 7M8 1L1 8" stroke="#fff" strokeWidth="2.200" /></svg>
          </div>
        </div>
      </div>
      <div className="flex h-[22px] shrink-0 items-center border-b border-[#cfcfcf] pl-[10px] text-black">
        {MENU.map(([a, k, b, w]) => (
          <div key={a + k + b} className={`${w} whitespace-nowrap`}>
            {a}<span className="underline underline-offset-2">{k}</span>{b}
          </div>
        ))}
      </div>
      <div className="flex h-[39px] shrink-0 items-center border-b border-[#b4b4b4] bg-gradient-to-b from-[#fafafa] to-[#ededed]">
        <div className="flex w-3 justify-center pl-1"><Dots cols={2} rows={6} /></div>
        <Tools slot="w-[33px]" size="size-6" items={TOOLS1} />
        <div className="flex h-[31px] w-[31px] shrink-0 items-center justify-center rounded-[3px] border border-[#a8a8a8] bg-[#d9d9d9]"><Icon n="select" /></div>
        <div className="flex h-[31px] w-3 shrink-0 items-center justify-center rounded-[3px] border border-[#a8a8a8] bg-[#d9d9d9]"><Tri /></div>
        <Tools slot="w-[33px]" size="size-6" items={TOOLS1B} />
      </div>
      <div className="flex h-[39px] shrink-0 items-center border-b border-[#b4b4b4] bg-gradient-to-b from-[#fafafa] to-[#ededed]">
        <div className="flex w-3 justify-center pl-1"><Dots cols={2} rows={6} /></div>
        <Tools slot="w-[33px]" size="size-6" items={TOOLS2} />
      </div>
      <div className="flex h-[912px] shrink-0">
        <LeftBar />
        <LayersDock />
        <div className="w-[6px] shrink-0" />
        <div className="flex w-[955px] shrink-0 flex-col">
          <div className="border-x border-b border-[#b4b4b4]"><MapCanvas /></div>
          <div className="flex h-1 items-center justify-center"><Dots cols={6} rows={1} /></div>
          <AttributeDock />
        </div>
        <div className="flex w-[6px] shrink-0 flex-col justify-center"><Dots cols={1} rows={5} /></div>
        <TopologyDock />
      </div>
      <StatusBar />
    </div>
  );
}
